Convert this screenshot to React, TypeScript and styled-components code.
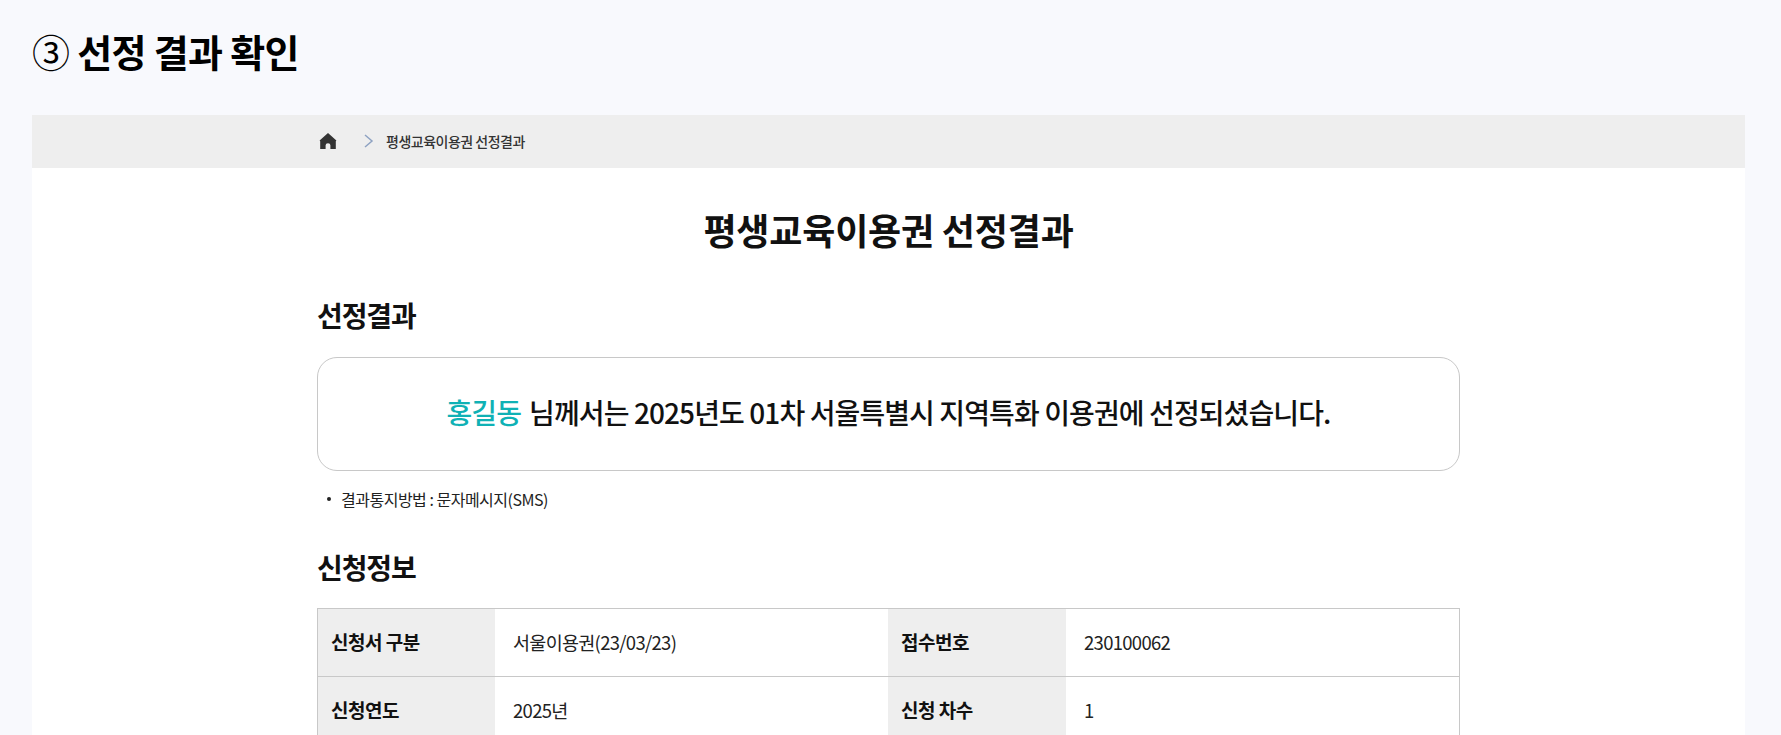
import * as React from 'react';
import styled, { createGlobalStyle } from 'styled-components';

const GlobalStyle = createGlobalStyle`
  html, body {
    margin: 0;
    padding: 0;
    height: 735px;
    overflow: hidden;
    background: #f8f9fd;
    font-family: "Noto Sans CJK KR", "Noto Sans", sans-serif;
    color: #111;
  }
`;

const Page = styled.div`
  padding: 23px 36px 0 32px;
`;

const StepTitle = styled.h1`
  margin: 0 0 37px;
  font-size: 38px;
  line-height: 55px;
  font-weight: 700;
  letter-spacing: -0.7px;
  color: #000;
`;

const StepNumber = styled.span`
  font-weight: 400;
`;

const Panel = styled.div`
  background: #fff;
`;

const BreadcrumbBar = styled.div`
  background: #eeeeee;
  height: 51px;
  padding: 0 0 2px 287px;
  display: flex;
  align-items: center;
`;

const HomeIcon = styled.svg`
  width: 18px;
  height: 18px;
  fill: #333;
  margin-right: 26px;
`;

const ChevronIcon = styled.svg`
  width: 12px;
  height: 14px;
  fill: none;
  stroke: #8ea2c2;
  stroke-width: 1.5;
  margin-right: 11px;
`;

const Crumb = styled.span`
  font-size: 14px;
  font-weight: 500;
  letter-spacing: -0.5px;
  color: #333;
`;

const Content = styled.div`
  width: 1143px;
  margin-left: 285px;
`;

const PageTitle = styled.h2`
  margin: 37px 0 0;
  text-align: center;
  font-size: 36px;
  line-height: 48px;
  font-weight: 700;
  letter-spacing: -0.2px;
  color: #111;
`;

const SectionTitle = styled.h3`
  margin: 0;
  font-size: 28px;
  line-height: 36px;
  font-weight: 700;
  letter-spacing: -1.1px;
  color: #111;
`;

const ResultTitle = styled(SectionTitle)`
  margin-top: 44px;
`;

const ResultBox = styled.div`
  margin-top: 24px;
  height: 108px;
  padding-bottom: 4px;
  border: 1px solid #c8c8c8;
  border-radius: 20px;
  display: flex;
  align-items: center;
  justify-content: center;
  font-size: 28px;
  font-weight: 500;
  letter-spacing: -0.9px;
  color: #111;
`;

const Name = styled.span`
  color: #0fb1b5;
  margin-right: 8px;
`;

const NoteList = styled.ul`
  margin: 16px 0 0;
  padding: 0 0 0 10px;
  list-style: none;
  font-size: 16px;
  line-height: 24px;
  letter-spacing: -0.5px;
  color: #222;
`;

const NoteItem = styled.li`
  display: flex;
  align-items: center;
  gap: 10px;

  &::before {
    content: '';
    width: 4px;
    height: 4px;
    border-radius: 50%;
    background: #222;
  }
`;

const InfoTitle = styled(SectionTitle)`
  margin-top: 38px;
`;

const InfoTable = styled.div`
  margin-top: 23px;
  border: 1px solid #c8c8c8;
  border-bottom: none;
  display: grid;
  grid-template-columns: 177px 393px 178px 1fr;
`;

const Cell = styled.div`
  height: 65px;
  padding: 0 0 2px 18px;
  border-bottom: 1px solid #c8c8c8;
  display: flex;
  align-items: center;
  font-size: 18.5px;
  color: #222;
  letter-spacing: -0.7px;
`;

const HeadCell = styled(Cell)`
  background: #eeeeee;
  font-size: 19px;
  font-weight: 700;
  letter-spacing: -0.5px;
  color: #111;
  padding-left: 13px;
`;

const rows: [string, string, string, string][] = [
  ['신청서 구분', '서울이용권(23/03/23)', '접수번호', '230100062'],
  ['신청연도', '2025년', '신청 차수', '1'],
];

export default function App() {
  return (
    <>
      <GlobalStyle />
      <Page>
        <StepTitle><StepNumber>③</StepNumber> 선정 결과 확인</StepTitle>
        <Panel>
          <BreadcrumbBar>
            <HomeIcon viewBox="0 0 18 18">
              <path d="M9 1 0.6 8.4 1.2 9.2 1.2 17H6.6V13.2Q6.6 11.2 9 11.2T11.4 13.2V17H16.8V9.2L17.4 8.4Z" />
            </HomeIcon>
            <ChevronIcon viewBox="0 0 12 14">
              <path d="M2 1 9 7 2 13" />
            </ChevronIcon>
            <Crumb>평생교육이용권 선정결과</Crumb>
          </BreadcrumbBar>
          <Content>
            <PageTitle>평생교육이용권 선정결과</PageTitle>
            <ResultTitle>선정결과</ResultTitle>
            <ResultBox>
              <Name>홍길동</Name>님께서는 2025년도 01차 서울특별시 지역특화 이용권에 선정되셨습니다.
            </ResultBox>
            <NoteList>
              <NoteItem>결과통지방법 : 문자메시지(SMS)</NoteItem>
            </NoteList>
            <InfoTitle>신청정보</InfoTitle>
            <InfoTable>
              {rows.map(([a, b, c, d]) => (
                <React.Fragment key={a}>
                  <HeadCell>{a}</HeadCell>
                  <Cell>{b}</Cell>
                  <HeadCell>{c}</HeadCell>
                  <Cell>{d}</Cell>
                </React.Fragment>
              ))}
            </InfoTable>
          </Content>
        </Panel>
      </Page>
    </>
  );
}
